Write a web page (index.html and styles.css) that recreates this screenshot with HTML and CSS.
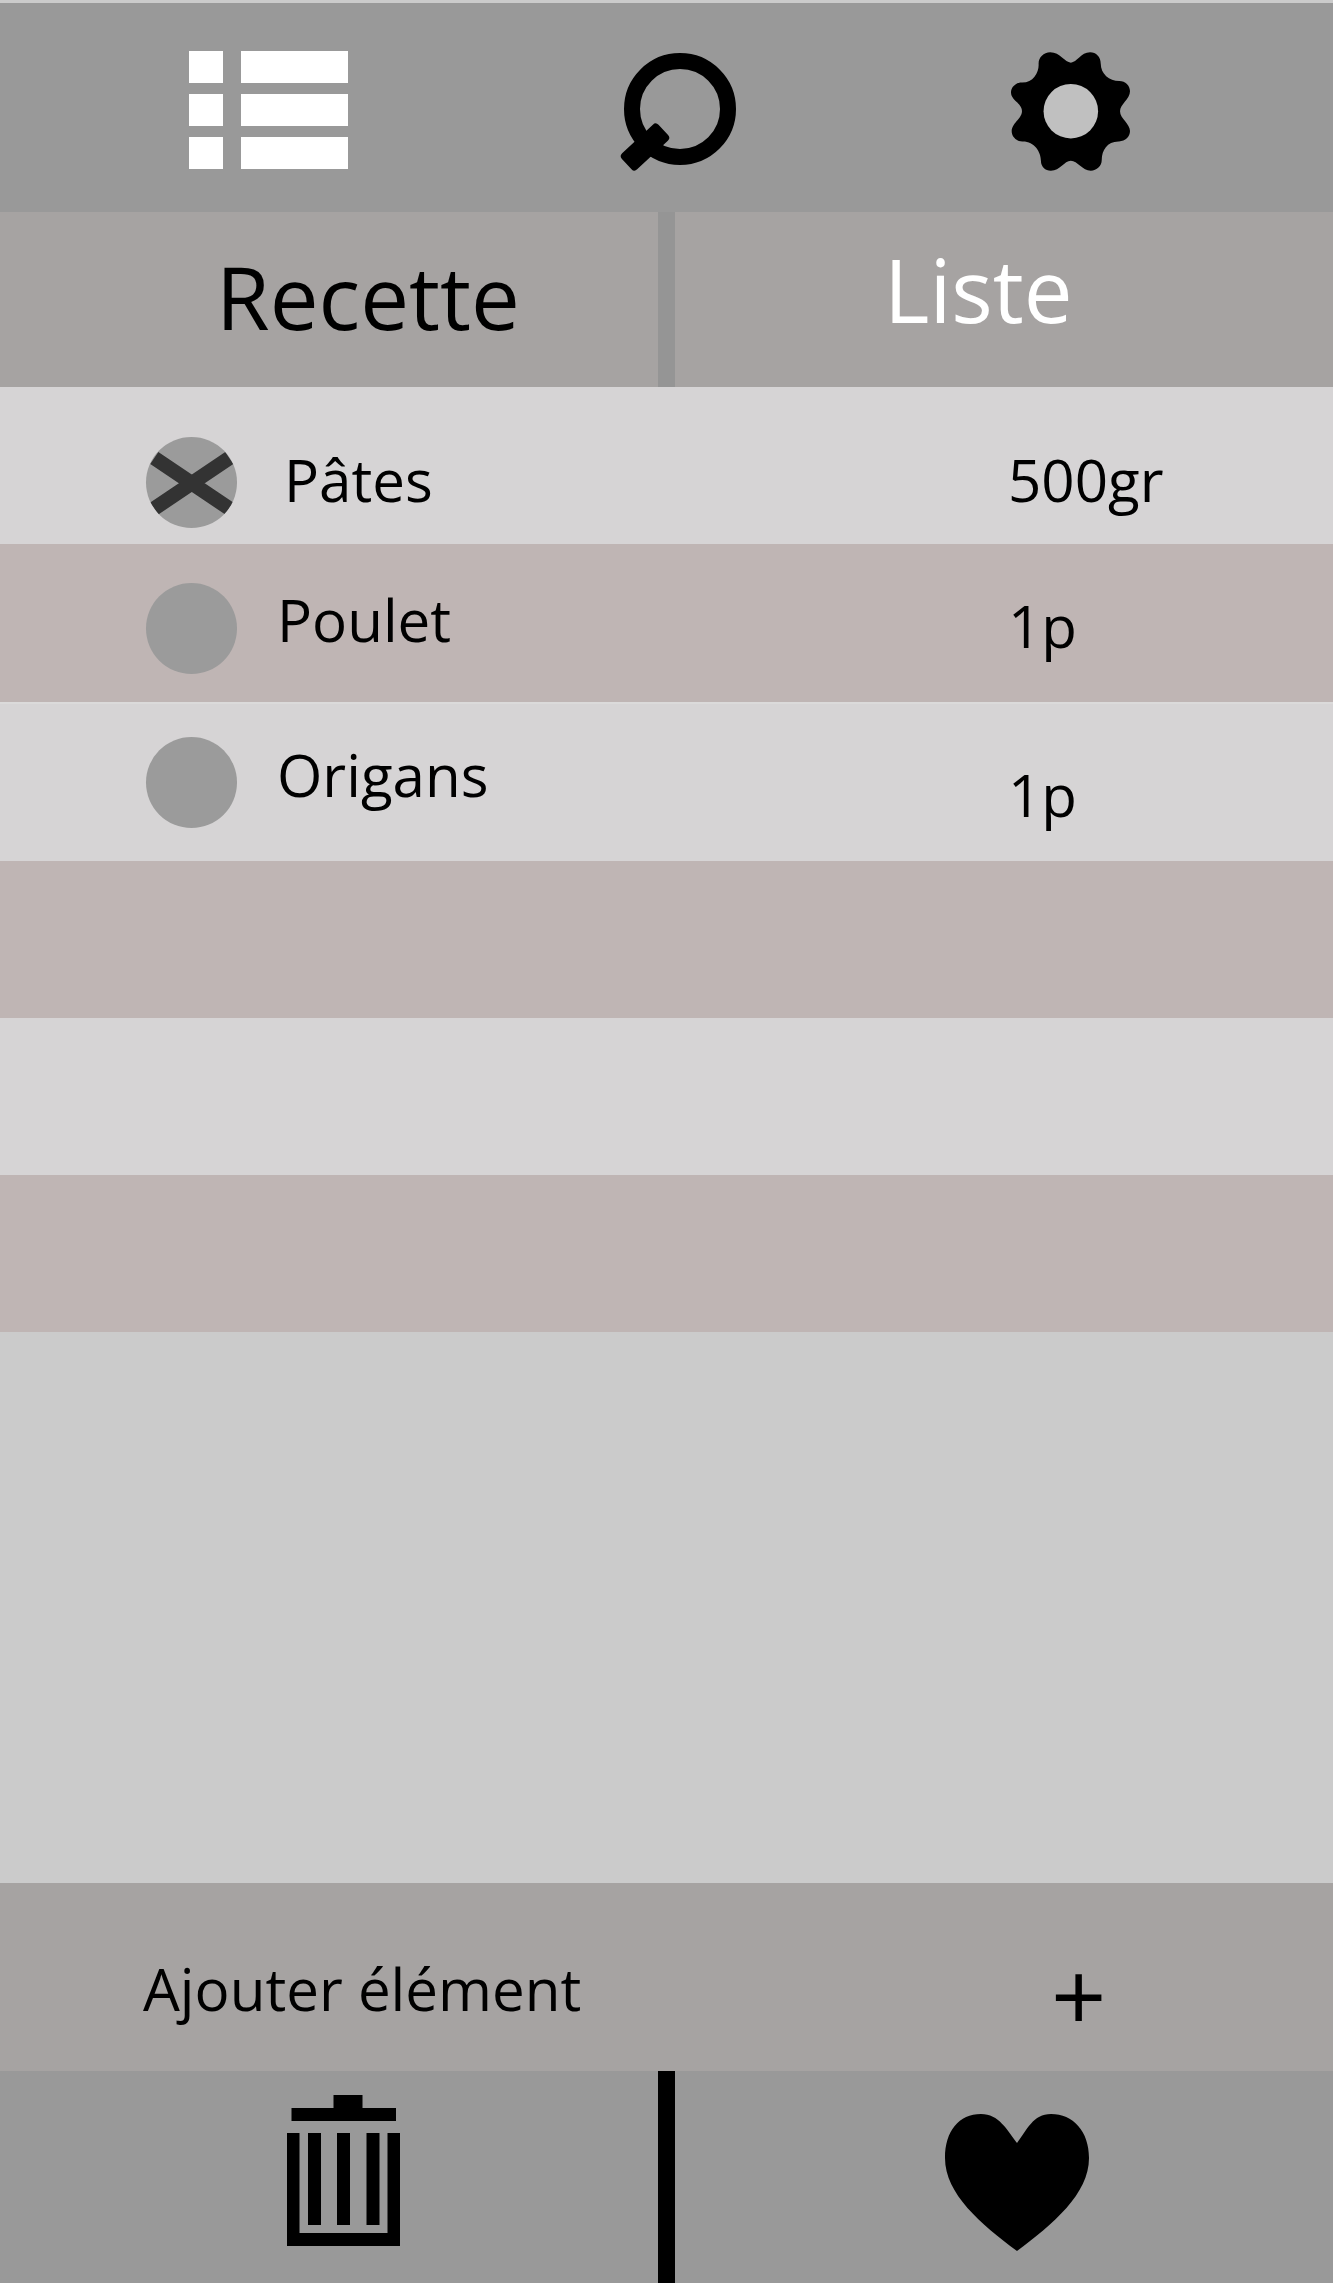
FILE: index.html
```html
<!DOCTYPE html>
<html lang="fr">
<head>
<meta charset="utf-8">
<title>Liste</title>
<link rel="stylesheet" href="styles.css">
</head>
<body>
<div class="app">
  <header class="topbar">
    <svg class="icon-list" viewBox="0 0 159 118" aria-hidden="true">
      <rect x="0" y="0" width="34" height="32"/><rect x="52" y="0" width="107" height="32"/>
      <rect x="0" y="43" width="34" height="32"/><rect x="52" y="43" width="107" height="32"/>
      <rect x="0" y="86" width="34" height="32"/><rect x="52" y="86" width="107" height="32"/>
    </svg>
    <svg class="icon-search" viewBox="0 0 118 120" aria-hidden="true">
      <circle cx="61" cy="56" r="48" fill="none" stroke="#000" stroke-width="16"/>
      <rect x="1" y="83" width="50" height="22" rx="4" transform="rotate(-43 26 94)"/>
    </svg>
    <svg class="icon-gear" viewBox="60 66 358 356" aria-hidden="true">
      <path d="M240 97C222 97 208 66 178 66C158 66 143 82 143 100C145 125 128 158 92 157C74 157 60 170 60 187C60 210 93 220 93 243C93 265 62 280 62 303C62 320 76 334 94 334C130 333 150 365 150 392C150 410 163 422 180 422C208 422 220 392 240 392C260 392 275 422 300 422C318 422 333 408 333 390C333 360 350 333 385 334C404 334 418 320 418 303C418 280 388 265 388 243C388 222 418 207 418 183C418 166 404 152 386 152C355 152 330 130 330 100C330 80 316 66 298 66C270 66 258 97 240 97Z"/>
      <circle cx="240" cy="243" r="82" fill="#c0c0c0"/>
    </svg>
  </header>

  <nav class="tabs">
    <div class="tab tab-recipe">Recette</div>
    <div class="tab tab-list">Liste</div>
  </nav>

  <main class="list">
    <div class="row row-light row-pates">
      <span class="check check-done">
        <svg viewBox="0 0 91 91" aria-hidden="true"><path d="M8.300 21L83.300 71.500M8.300 71.500L83.300 21" stroke="#333" stroke-width="14.500" fill="none"/></svg>
      </span>
      <span class="name">Pâtes</span>
      <span class="qty">500gr</span>
    </div>
    <div class="row row-dark row-poulet">
      <span class="check"></span>
      <span class="name">Poulet</span>
      <span class="qty">1p</span>
    </div>
    <div class="row row-light row-origans">
      <span class="check"></span>
      <span class="name">Origans</span>
      <span class="qty">1p</span>
    </div>
    <div class="row row-dark"></div>
    <div class="row row-light"></div>
    <div class="row row-dark"></div>
  </main>

  <div class="spacer"></div>

  <div class="add">
    <span class="add-label">Ajouter élément</span>
    <span class="add-plus">+</span>
  </div>

  <footer class="bottombar">
    <div class="bottom-cell bottom-left">
      <svg class="icon-trash" viewBox="0 0 113 151" aria-hidden="true">
        <rect x="4.500" y="13" width="104.500" height="13"/>
        <rect x="46.500" y="0" width="29" height="26"/>
        <path d="M0 38H12.500V138H100.500V38H113V151H0Z"/>
        <rect x="21" y="38" width="13" height="92"/>
        <rect x="50" y="38" width="13" height="92"/>
        <rect x="79.500" y="38" width="13" height="92"/>
      </svg>
    </div>
    <div class="bottom-divider"></div>
    <div class="bottom-cell bottom-right">
      <svg class="icon-heart" viewBox="0 0 144 137" aria-hidden="true">
        <path d="M72 29C62 16 54 0 36 0C14 0 0 17 0 44C0 80 36 110 72 137C108 110 144 80 144 44C144 17 128 0 106 0C88 0 82 16 72 29Z"/>
      </svg>
    </div>
  </footer>
</div>
</body>
</html>
```
FILE: styles.css
```css
html, body { margin: 0; padding: 0; }
body { background: #fff; font-family: "Open Sans", sans-serif; color: #000; }
.app { width: 1333px; height: 2283px; padding-top: 3px; box-sizing: border-box; display: flex; flex-direction: column; background: #cbcbcb; overflow: hidden; }
.topbar { height: 209px; background: #999; position: relative; flex: none; }
.topbar svg { position: absolute; }
.icon-list { left: 189px; top: 48px; width: 159px; height: 118px; fill: #fff; }
.icon-search { left: 619px; top: 50px; width: 118px; height: 120px; }
.icon-gear { left: 1011px; top: 49px; width: 119px; height: 119px; }
.tabs { height: 175px; flex: none; display: flex; background: #a6a3a2; }
.tab { font-size: 87px; line-height: 1; }
.tab-recipe { width: 658px; padding-left: 216px; padding-top: 41px; box-sizing: border-box; }
.tab-list { flex: 1; border-left: 17px solid #959595; padding-left: 209px; padding-top: 34px; color: #fff; }
.list { flex: none; }
.row { height: 157px; display: flex; box-sizing: border-box; position: relative; }
.row-light { background: #d6d4d5; }
.row-dark { background: #bfb5b4; }
.check { width: 91px; height: 91px; border-radius: 50%; background: #9b9b9b; margin-left: 146px; flex: none; display: block; overflow: hidden; }
.check svg { width: 91px; height: 91px; display: block; }
.name, .qty { font-size: 58.300px; line-height: 76px; }
.qty { position: absolute; left: 1008px; }
.row-pates .check { margin-top: 50px; }
.row-pates .name { margin-left: 47px; margin-top: 55px; }
.row-pates .qty { top: 55px; }
.row-poulet { height: 158px; }
.row-poulet .check { margin-top: 39px; }
.row-poulet .name { margin-left: 40px; margin-top: 38px; }
.row-poulet .qty { top: 44px; }
.row-origans { height: 159px; border-top: 2px solid #dbdada; }
.row-origans .check { margin-top: 33px; }
.row-origans .name { margin-left: 40px; margin-top: 33px; }
.row-origans .qty { top: 53px; }
.spacer { flex: 1; }
.add { height: 188px; flex: none; background: #a6a3a2; display: flex; position: relative; font-size: 58.300px; }
.add-label { margin-left: 143px; margin-top: 68px; line-height: 76px; }
.add-plus { position: absolute; left: 1051px; top: 62px; font-size: 97px; line-height: 98px; }
.bottombar { height: 212px; flex: none; display: flex; background: #999; }
.bottom-cell { position: relative; }
.bottom-left { width: 658px; }
.bottom-divider { width: 17px; background: #000; }
.bottom-right { flex: 1; }
.icon-trash { position: absolute; left: 287px; top: 24px; width: 113px; height: 151px; }
.icon-heart { position: absolute; left: 270px; top: 43px; width: 144px; height: 137px; }
```
